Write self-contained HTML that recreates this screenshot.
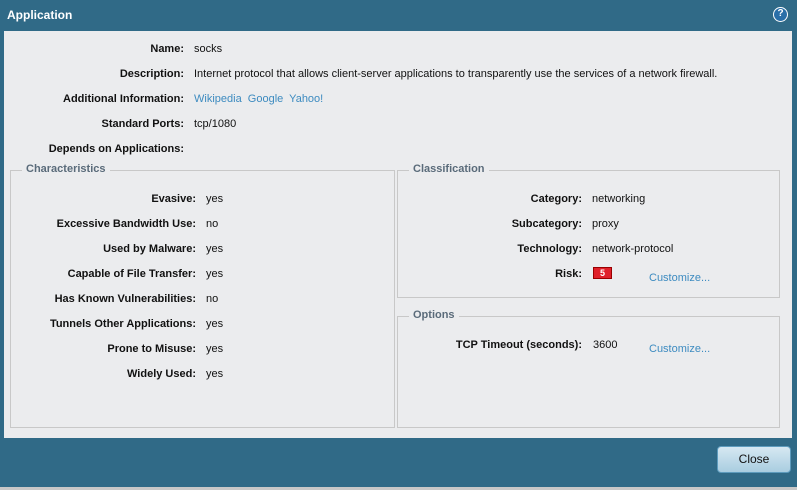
<!DOCTYPE html><html><head><style>
*{margin:0;padding:0;box-sizing:border-box}
body{width:797px;height:490px;background:#c8c8c8;font-family:"Liberation Sans",sans-serif;font-size:11px;color:#111;position:relative;overflow:hidden}
.frame{position:absolute;left:0;top:0;width:797px;height:487px;background:#306a87}
.title{position:absolute;left:7px;top:8px;color:#fff;font-weight:bold;font-size:12px}
.help{position:absolute;left:773px;top:7px;width:15px;height:15px;border-radius:50%;background:#2a6fa8;border:1.5px solid #fff;color:#fff;font-size:10px;font-weight:bold;text-align:center;line-height:12px}
.panel{position:absolute;left:4px;top:31px;width:788px;height:407px;background:#ebecee}
.t{position:absolute;white-space:nowrap;line-height:14px;margin-top:1px}
.l{font-weight:bold;text-align:right}
.lk{color:#3d8bc0}
.fs{position:absolute;border:1px solid #c8c8c8}
.lg{position:absolute;background:#ebecee;color:#5a6b7a;font-weight:bold;padding:0 4px;top:-8px;left:11px;font-size:11px}
.risk{position:absolute;left:593px;top:267px;width:19px;height:12px;background:#e0202a;border:1px solid #900;color:#fff;font-size:9px;font-weight:bold;text-align:center;line-height:10px}
.btn{position:absolute;left:717px;top:446px;width:74px;height:27px;border-radius:4px;border:1px solid #5d9bbd;background:linear-gradient(#d6e8f2,#a9cde0);text-align:center;line-height:25px;font-size:12px;color:#111}
</style></head><body>
<div class="frame"></div>
<div class="title">Application</div>
<div class="help">?</div>
<div class="panel"></div>
<div class="t l" style="right:613px;top:41px">Name:</div><div class="t" style="left:194px;top:41px">socks</div>
<div class="t l" style="right:613px;top:66px">Description:</div><div class="t" style="left:194px;top:66px">Internet protocol that allows client-server applications to transparently use the services of a network firewall.</div>
<div class="t l" style="right:613px;top:91px">Additional Information:</div><div class="t lk" style="left:194px;top:91px">Wikipedia&nbsp; Google&nbsp; Yahoo!</div>
<div class="t l" style="right:613px;top:116px">Standard Ports:</div><div class="t" style="left:194px;top:116px">tcp/1080</div>
<div class="t l" style="right:613px;top:141px">Depends on Applications:</div>

<div class="fs" style="left:10px;top:170px;width:385px;height:258px"><div class="lg">Characteristics</div></div>
<div class="t l" style="right:601px;top:191px">Evasive:</div><div class="t" style="left:206px;top:191px">yes</div>
<div class="t l" style="right:601px;top:216px">Excessive Bandwidth Use:</div><div class="t" style="left:206px;top:216px">no</div>
<div class="t l" style="right:601px;top:241px">Used by Malware:</div><div class="t" style="left:206px;top:241px">yes</div>
<div class="t l" style="right:601px;top:266px">Capable of File Transfer:</div><div class="t" style="left:206px;top:266px">yes</div>
<div class="t l" style="right:601px;top:291px">Has Known Vulnerabilities:</div><div class="t" style="left:206px;top:291px">no</div>
<div class="t l" style="right:601px;top:316px">Tunnels Other Applications:</div><div class="t" style="left:206px;top:316px">yes</div>
<div class="t l" style="right:601px;top:341px">Prone to Misuse:</div><div class="t" style="left:206px;top:341px">yes</div>
<div class="t l" style="right:601px;top:366px">Widely Used:</div><div class="t" style="left:206px;top:366px">yes</div>

<div class="fs" style="left:397px;top:170px;width:383px;height:128px"><div class="lg">Classification</div></div>
<div class="t l" style="right:215px;top:191px">Category:</div><div class="t" style="left:592px;top:191px">networking</div>
<div class="t l" style="right:215px;top:216px">Subcategory:</div><div class="t" style="left:592px;top:216px">proxy</div>
<div class="t l" style="right:215px;top:241px">Technology:</div><div class="t" style="left:592px;top:241px">network-protocol</div>
<div class="t l" style="right:215px;top:266px">Risk:</div><div class="risk">5</div>
<div class="t lk" style="left:649px;top:270px">Customize...</div>

<div class="fs" style="left:397px;top:316px;width:383px;height:112px"><div class="lg">Options</div></div>
<div class="t l" style="right:215px;top:337px">TCP Timeout (seconds):</div><div class="t" style="left:593px;top:337px">3600</div>
<div class="t lk" style="left:649px;top:341px">Customize...</div>

<div class="btn">Close</div>
</body></html>
